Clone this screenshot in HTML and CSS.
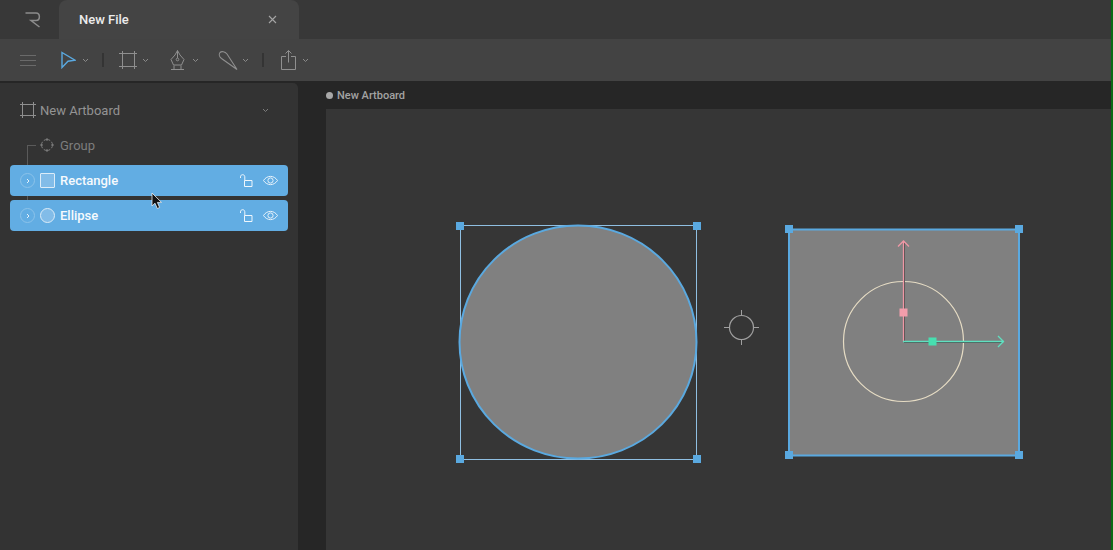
FILE: index.html
```html
<!DOCTYPE html>
<html lang="en">

<head>
    <meta charset="UTF-8">
    <title>New File</title>
    <link rel="stylesheet" href="styles.css">
</head>

<body>

    <div class="tabbar">
        <div class="logo">
            <svg width="16" height="16" viewBox="0 0 16 16" fill="none" stroke="#8c8c8c" stroke-width="1.5">
                <path d="M0.5 1H11C15.5 1 15.5 8.5 11 8.5H6L14.5 15" />
            </svg>
        </div>
        <div class="tab">
            <span class="tab-title">New File</span>
            <svg class="tab-close" width="9" height="9" viewBox="0 0 9 9" stroke="#a5a5a5" stroke-width="1.1">
                <path d="M1 1L8 8M8 1L1 8" />
            </svg>
        </div>
    </div>

    <div class="toolbar">
        <svg class="menu-icon" width="16" height="12" viewBox="0 0 16 12" stroke="#6a6a6a" stroke-width="1">
            <path d="M0 1.5H16M0 6.5H16M0 11.5H16" />
        </svg>

        <div class="tool tool-select">
            <svg width="16" height="18" viewBox="0 0 16 18" fill="none" stroke="#5aa9e0" stroke-width="1.4">
                <path d="M2 1.5L15 9.2L8 10.2L2 16.5Z" />
            </svg>
            <svg class="chev" width="7" height="5" viewBox="0 0 7 5" fill="none" stroke="#8a8a8a"><path d="M1 1L3.5 3.5L6 1" /></svg>
        </div>
        <div class="sep sep-first"></div>

        <div class="tool tool-frame">
            <svg width="18" height="20" viewBox="0 0 18 20" fill="none" stroke="#8f8f8f" stroke-width="1">
                <path d="M3.5 1V19M15.5 1V19M0 3.5H18M0 16.5H18" />
            </svg>
            <svg class="chev" width="7" height="5" viewBox="0 0 7 5" fill="none" stroke="#8a8a8a"><path d="M1 1L3.5 3.5L6 1" /></svg>
        </div>

        <div class="tool tool-pen">
            <svg width="16" height="20" viewBox="0 0 16 20" fill="none" stroke="#8f8f8f" stroke-width="1">
                <path d="M7.5 0.5L10 5L14 9.5L11.5 15H3.5L1 9.5L5 5Z" />
                <path d="M7.5 0.5V8" />
                <circle cx="7.5" cy="9.5" r="1.3" />
                <path d="M4 15.5V19M11 15.5V19M1 19.5H14" />
            </svg>
            <svg class="chev" width="7" height="5" viewBox="0 0 7 5" fill="none" stroke="#8a8a8a"><path d="M1 1L3.5 3.5L6 1" /></svg>
        </div>

        <div class="tool tool-brush">
            <svg width="20" height="20" viewBox="0 0 20 20" fill="none" stroke="#8f8f8f" stroke-width="1.1">
                <path d="M19 19.5L9 4C7 1.5 3.5 1 2 2.5C0.5 4.5 1.5 7 3.5 8.5Z" />
            </svg>
            <svg class="chev" width="7" height="5" viewBox="0 0 7 5" fill="none" stroke="#8a8a8a"><path d="M1 1L3.5 3.5L6 1" /></svg>
        </div>
        <div class="sep sep-second"></div>

        <div class="tool tool-share">
            <svg width="16" height="21" viewBox="0 0 16 21" fill="none" stroke="#8f8f8f" stroke-width="1">
                <path d="M6 6.5H1.5V19.5H15.5V6.5H11M8.5 12.5V0.5M5.5 3.5L8.5 0.5L11.5 3.5" />
            </svg>
            <svg class="chev" width="7" height="5" viewBox="0 0 7 5" fill="none" stroke="#8a8a8a"><path d="M1 1L3.5 3.5L6 1" /></svg>
        </div>
    </div>

    <div class="workspace">
        <div class="sidebar">
            <div class="artboard-row">
                <svg width="16" height="16" viewBox="0 0 16 16" fill="none" stroke="#8f8f8f" stroke-width="1">
                    <path d="M2.5 0V16M13.5 0V16M0 2.5H16M0 13.5H16" />
                </svg>
                <span class="artboard-name">New Artboard</span>
                <svg class="artboard-chev" width="7" height="5" viewBox="0 0 7 5" fill="none" stroke="#7c7c7c"><path d="M1 1L3.5 3.5L6 1" /></svg>
            </div>

            <div class="group-row">
                <div class="tree-line"></div>
                <svg width="14" height="14" viewBox="0 0 14 14" fill="none" stroke="#7d7d7d" stroke-width="1">
                    <circle cx="7" cy="7" r="5.5" pathLength="40" stroke-dasharray="8 2" stroke-dashoffset="4" />
                    <path d="M7 0V3M7 11V14M0 7H3M11 7H14" />
                </svg>
                <span class="group-name">Group</span>
            </div>

            <div class="layer">
                <span class="expand"><svg width="4" height="6" viewBox="0 0 4 6" fill="none" stroke="#e4f1fb"><path d="M1 1L3 3L1 5" /></svg></span>
                <span class="thumb"></span>
                <span class="layer-name">Rectangle</span>
                <svg class="lock" width="13" height="13" viewBox="0 0 13 13" fill="none" stroke="#eef6fc" stroke-width="1">
                    <path d="M4.5 6.5H12V12.5H4.5ZM0.5 4V2.8C0.5 0 4.8 0 4.8 2.8V6.5" />
                </svg>
                <svg class="eye" width="15" height="11" viewBox="0 0 15 11" fill="none" stroke="#e6f2fb" stroke-width="1">
                    <path d="M0.5 5.5C4 0 11 0 14.5 5.5C11 11 4 11 0.5 5.5Z" />
                    <circle cx="7.5" cy="5.5" r="2.6" />
                </svg>
            </div>

            <div class="layer">
                <span class="expand"><svg width="4" height="6" viewBox="0 0 4 6" fill="none" stroke="#e4f1fb"><path d="M1 1L3 3L1 5" /></svg></span>
                <span class="thumb thumb-round"></span>
                <span class="layer-name">Ellipse</span>
                <svg class="lock" width="13" height="13" viewBox="0 0 13 13" fill="none" stroke="#eef6fc" stroke-width="1">
                    <path d="M4.5 6.5H12V12.5H4.5ZM0.5 4V2.8C0.5 0 4.8 0 4.8 2.8V6.5" />
                </svg>
                <svg class="eye" width="15" height="11" viewBox="0 0 15 11" fill="none" stroke="#e6f2fb" stroke-width="1">
                    <path d="M0.5 5.5C4 0 11 0 14.5 5.5C11 11 4 11 0.5 5.5Z" />
                    <circle cx="7.5" cy="5.5" r="2.6" />
                </svg>
            </div>

            <svg class="cursor" width="12" height="18" viewBox="0 0 12 18">
                <path d="M1 1V14L4 11.2L6.3 16.5L8.6 15.5L6.4 10.4H10.5Z" fill="#111" stroke="#eee" stroke-width="0.8" />
            </svg>
        </div>

        <div class="main">
            <div class="artboard-label">
                <span class="dot"></span>
                <span>New Artboard</span>
            </div>
            <div class="artboard">
                <!-- viewBox is in page coordinates so shapes can be read off the screen -->
                <svg class="stage" width="787" height="441" viewBox="326 109 787 441" fill="none">
                    <rect x="460.5" y="225.5" width="236" height="234" stroke="#8fbfe2" />
                    <ellipse cx="578" cy="342" rx="118.5" ry="116.5" fill="#808080" stroke="#5aa9e0" stroke-width="2" />
                    <rect x="456" y="222" width="8" height="8" fill="#5aa9e0" />
                    <rect x="693" y="222" width="8" height="8" fill="#5aa9e0" />
                    <rect x="456" y="455" width="8" height="8" fill="#5aa9e0" />
                    <rect x="693" y="455" width="8" height="8" fill="#5aa9e0" />

                    <circle cx="741.5" cy="327.5" r="12" stroke="#a0a0a0" stroke-width="1.2" />
                    <path d="M741.5 310V316M741.5 339V345M724 327.5H730M753 327.5H759" stroke="#a0a0a0" />

                    <rect x="789" y="229.5" width="230" height="226" fill="#808080" stroke="#5aa9e0" stroke-width="2" />
                    <rect x="785" y="225" width="8" height="8" fill="#5aa9e0" />
                    <rect x="1015" y="225" width="8" height="8" fill="#5aa9e0" />
                    <rect x="785" y="451" width="8" height="8" fill="#5aa9e0" />
                    <rect x="1015" y="451" width="8" height="8" fill="#5aa9e0" />

                    <circle cx="903.5" cy="341.5" r="60" stroke="#e6dcc4" stroke-width="1.2" />
                    <path d="M904.5 342.5V242M904 342.5H1003" stroke="#4a4a4a" stroke-width="1" />
                    <path d="M903.5 341.5V241M898 246.5L903.5 241L909 246.5" stroke="#ef97a5" stroke-width="1.3" />
                    <path d="M903 341.5H1004M998 336L1003.5 341.5L998 347" stroke="#5fe0c0" stroke-width="1.3" />
                    <rect x="899.5" y="308.5" width="8" height="8" fill="#f29dab" />
                    <rect x="928.5" y="337.5" width="8" height="8" fill="#47dfb0" />
                </svg>
            </div>
        </div>
    </div>

</body>

</html>
```

FILE: styles.css
```css
html,
body {
    height: 100%;
}

body {
    margin: 0;
    overflow: hidden;
    background-color: #262626;
    border-right: 2px solid #0b6b16;
    box-sizing: border-box;
    display: flex;
    flex-direction: column;
    font-family: Roboto, "Liberation Sans", sans-serif;
}

svg {
    display: block;
    flex: none;
}

/* Tab bar */
.tabbar {
    display: flex;
    height: 39px;
    background-color: #383838;
}

.logo {
    width: 59px;
    display: flex;
    align-items: center;
    padding-left: 25px;
    box-sizing: border-box;
}

.tab {
    width: 240px;
    display: flex;
    align-items: center;
    justify-content: space-between;
    padding: 0 22px 0 20px;
    box-sizing: border-box;
    background-color: #444;
    border-radius: 8px 8px 0 0;
}

.tab-title {
    color: #ececec;
    font-size: 13px;
    font-weight: 500;
}

/* Toolbar */
.toolbar {
    display: flex;
    align-items: center;
    height: 42px;
    background-color: #434343;
    padding-left: 20px;
}

.tool {
    display: flex;
    align-items: center;
    gap: 6px;
}

.sep {
    width: 2px;
    height: 14px;
    background-color: #343434;
}

.tool-select {
    margin-left: 24px;
}

.sep-first {
    margin-left: 13px;
}

.tool-frame {
    margin-left: 15px;
    gap: 5px;
}

.tool-pen {
    margin-left: 21px;
}

.tool-brush {
    margin-left: 19px;
    gap: 4px;
}

.sep-second {
    margin-left: 13px;
}

.tool-share {
    margin-left: 16px;
}

/* Workspace */
.workspace {
    flex: 1;
    display: flex;
    min-height: 0;
}

.sidebar {
    position: relative;
    width: 298px;
    margin-top: 2px;
    padding: 0 10px;
    box-sizing: border-box;
    background-color: #333;
    border-radius: 0 5px 0 0;
    flex: none;
}

.artboard-row {
    display: flex;
    align-items: center;
    height: 54px;
    margin-bottom: -2px;
    padding-left: 10px;
    padding-right: 19px;
}

.artboard-name {
    margin-left: 4px;
    color: #949494;
    font-size: 13px;
}

.artboard-chev {
    margin-left: auto;
}

.group-row {
    position: relative;
    display: flex;
    align-items: center;
    height: 20px;
    padding-left: 30px;
    margin-bottom: 10px;
}

.tree-line {
    position: absolute;
    left: 17px;
    top: 10px;
    width: 8px;
    height: 56px;
    border-left: 1px solid #5a5a5a;
    border-top: 1px solid #5a5a5a;
}

.group-name {
    margin-left: 6px;
    color: #7d7d7d;
    font-size: 13px;
}

.layer {
    position: relative;
    display: flex;
    align-items: center;
    height: 31px;
    margin-bottom: 4px;
    padding: 0 10px 0 10px;
    background-color: #62ade3;
    border-radius: 4px;
}

.expand {
    width: 13px;
    height: 13px;
    display: flex;
    align-items: center;
    justify-content: center;
    border: 1px solid #8cc3ea;
    border-radius: 50%;
}

.thumb {
    width: 13px;
    height: 13px;
    margin-left: 5px;
    border: 1px solid #dcecf8;
    border-radius: 1px;
    background-color: #82bce8;
}

.thumb-round {
    border-radius: 50%;
}

.layer-name {
    margin-left: 5px;
    color: #f6fafd;
    font-size: 13px;
    font-weight: 500;
}

.lock {
    margin-left: auto;
}

.eye {
    margin-left: 10px;
}

.cursor {
    position: absolute;
    left: 151px;
    top: 109px;
}

/* Canvas */
.main {
    flex: 1;
    display: flex;
    flex-direction: column;
    min-width: 0;
    background-color: #262626;
    padding-left: 28px;
    padding-top: 1px;
}

.artboard-label {
    display: flex;
    align-items: center;
    gap: 4px;
    height: 27px;
    flex: none;
    color: #a3a3a3;
    font-size: 11px;
    font-weight: 500;
}

.dot {
    width: 7px;
    height: 7px;
    border-radius: 50%;
    background-color: #a8a8a8;
}

.artboard {
    flex: 1;
    background-color: #363636;
    min-height: 0;
}
```
